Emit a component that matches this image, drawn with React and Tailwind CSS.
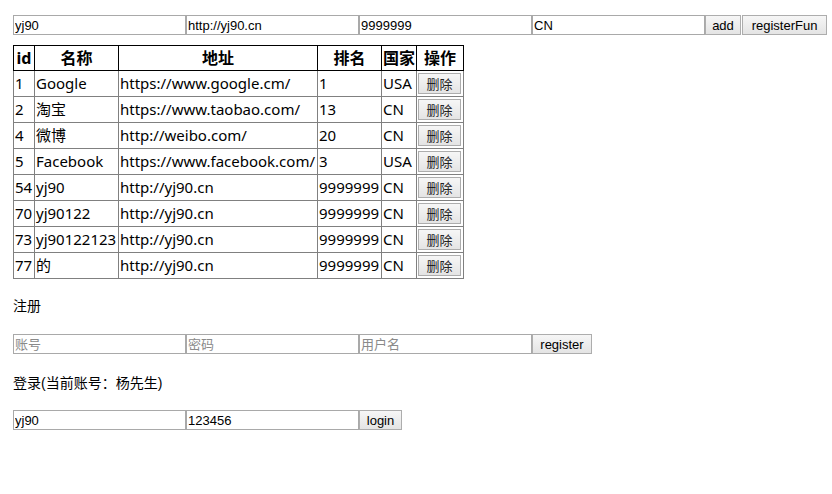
import { useState } from 'react';

const rows = [
  { id: 1, name: 'Google', url: 'https://www.google.cm/', alexa: '1', country: 'USA' },
  { id: 2, name: '淘宝', url: 'https://www.taobao.com/', alexa: '13', country: 'CN' },
  { id: 4, name: '微博', url: 'http://weibo.com/', alexa: '20', country: 'CN' },
  { id: 5, name: 'Facebook', url: 'https://www.facebook.com/', alexa: '3', country: 'USA' },
  { id: 54, name: 'yj90', url: 'http://yj90.cn', alexa: '9999999', country: 'CN' },
  { id: 70, name: 'yj90122', url: 'http://yj90.cn', alexa: '9999999', country: 'CN' },
  { id: 73, name: 'yj90122123', url: 'http://yj90.cn', alexa: '9999999', country: 'CN' },
  { id: 77, name: '的', url: 'http://yj90.cn', alexa: '9999999', country: 'CN' },
];

const inputCls =
  "shrink-0 w-[173px] h-[20px] border border-[#a9a9a9] bg-white px-[1px] text-[13px] text-black font-['Liberation_Sans','Noto_Sans_CJK_SC',sans-serif] placeholder:text-[#8a8a8a] outline-none";
const btnCls =
  "shrink-0 h-[20px] border border-[#adadad] bg-gradient-to-b from-[#f6f6f6] to-[#e4e4e4] px-[5px] text-[13px] text-black font-['Liberation_Sans','Noto_Sans_CJK_SC',sans-serif] leading-none";

export default function App() {
  const [name, setName] = useState('yj90');
  const [url, setUrl] = useState('http://yj90.cn');
  const [alexa, setAlexa] = useState('9999999');
  const [country, setCountry] = useState('CN');

  return (
    <div className="min-h-screen overflow-hidden bg-white px-[13px] pt-[15px] text-black font-['Noto_Sans','Noto_Sans_CJK_SC',sans-serif]">
      {/* add form */}
      <div className="flex">
        <input className={inputCls} value={name} onChange={(e) => setName(e.target.value)} />
        <input className={inputCls} value={url} onChange={(e) => setUrl(e.target.value)} />
        <input className={inputCls} value={alexa} onChange={(e) => setAlexa(e.target.value)} />
        <input className={inputCls} value={country} onChange={(e) => setCountry(e.target.value)} />
        <button className={`${btnCls} w-[36px]`}>add</button>
        <button className={`${btnCls} ml-[1px] w-[85px]`}>registerFun</button>
      </div>

      <table className="mt-[10px] border-collapse border border-black text-[15px] leading-none table-fixed">
        <thead>
          <tr className="h-[25px] text-[16px]">
            <th className="w-[21px] border border-black p-0 font-bold">id</th>
            <th className="w-[84px] border border-black p-0 font-bold">名称</th>
            <th className="w-[199px] border border-black p-0 font-bold">地址</th>
            <th className="w-[64px] border border-black p-0 font-bold">排名</th>
            <th className="w-[35px] border border-black p-0 font-bold">国家</th>
            <th className="w-[47px] border border-black p-0 font-bold">操作</th>
          </tr>
        </thead>
        <tbody>
          {rows.map((r) => (
            <tr key={r.id} className="h-[26px]">
              <td className="border border-[#808080] px-[1px] whitespace-nowrap">{r.id}</td>
              <td className="border border-[#808080] px-[1px] whitespace-nowrap">{r.name}</td>
              <td className="border border-[#808080] px-[1px] whitespace-nowrap">{r.url}</td>
              <td className="border border-[#808080] px-[1px] whitespace-nowrap">{r.alexa}</td>
              <td className="border border-[#808080] px-[1px] whitespace-nowrap">{r.country}</td>
              <td className="border border-[#808080] px-[1px]">
                <button className="flex h-[21px] w-[43px] items-center justify-center border border-[#adadad] bg-gradient-to-b from-[#f6f6f6] to-[#e4e4e4] text-[13px] text-[#222] font-['Noto_Sans_CJK_SC',sans-serif]">
                  删除
                </button>
              </td>
            </tr>
          ))}
        </tbody>
      </table>

      <p className="mt-[17px] text-[14px] leading-[18px] font-['Noto_Sans_CJK_SC',sans-serif]">注册</p>
      <div className="mt-[20px] flex">
        <input className={inputCls} placeholder="账号" />
        <input className={inputCls} placeholder="密码" />
        <input className={inputCls} placeholder="用户名" />
        <button className={`${btnCls} w-[60px]`}>register</button>
      </div>

      <p className="mt-[20px] text-[14px] leading-[18px] font-['Liberation_Sans','Noto_Sans_CJK_SC',sans-serif]">
        登录(当前账号：杨先生)
      </p>
      <div className="mt-[18px] flex">
        <input className={inputCls} defaultValue="yj90" />
        <input className={inputCls} defaultValue="123456" />
        <button className={`${btnCls} w-[43px]`}>login</button>
      </div>
    </div>
  );
}
